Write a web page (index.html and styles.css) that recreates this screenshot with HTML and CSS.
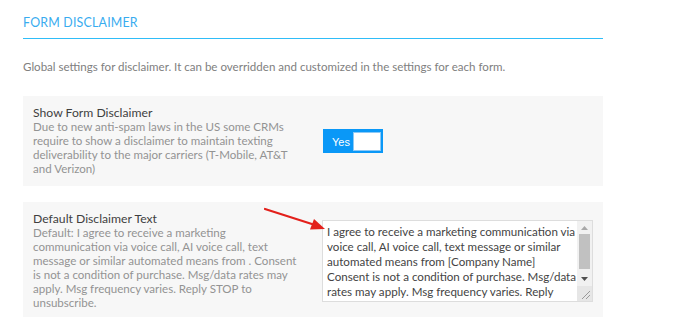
FILE: index.html
```html
<!DOCTYPE html>
<html>
<head>
<meta charset="utf-8">
<link rel="stylesheet" href="styles.css">
</head>
<body>
<div class="page">
  <h2 class="section-title">FORM DISCLAIMER</h2>
  <p class="section-desc">Global settings for disclaimer. It can be overridden and customized in the settings for each form.</p>

  <div class="setting">
    <div class="setting-info">
      <div class="setting-label">Show Form Disclaimer</div>
      <div class="setting-help">Due to new anti-spam laws in the US some CRMs require to show a disclaimer to maintain texting deliverability to the major carriers (T-Mobile, AT&amp;T and Verizon)</div>
    </div>
    <div class="setting-control">
      <div class="toggle"><span class="toggle-text">Yes</span><span class="toggle-knob"></span></div>
    </div>
  </div>

  <div class="setting setting-text">
    <div class="setting-info">
      <div class="setting-label">Default Disclaimer Text</div>
      <div class="setting-help">Default: I agree to receive a marketing communication via voice call, AI voice call, text message or similar automated means from . Consent is not a condition of purchase. Msg/data rates may apply. Msg frequency varies. Reply STOP to unsubscribe.</div>
    </div>
    <div class="setting-control">
      <div class="textarea-box">
        <textarea class="disclaimer-text">I agree to receive a marketing communication via voice call, AI voice call, text message or similar automated means from [Company Name] Consent is not a condition of purchase. Msg/data rates may apply. Msg frequency varies. Reply STOP to unsubscribe.</textarea>
        <div class="scrollbar">
          <div class="sb-button"><svg width="7" height="4" viewBox="0 0 7 4"><polygon points="0,4 3.5,0 7,4" fill="#a8a8a8"/></svg></div>
          <div class="sb-track"><div class="sb-thumb"></div></div>
          <div class="sb-button"><svg width="7" height="4" viewBox="0 0 7 4"><polygon points="0,0 7,0 3.5,4" fill="#505050"/></svg></div>
          <div class="sb-corner"><svg width="15" height="15" viewBox="0 0 15 15"><line x1="13" y1="5" x2="5" y2="13" stroke="#999" stroke-width="1"/><line x1="13" y1="9" x2="9" y2="13" stroke="#999" stroke-width="1"/></svg></div>
        </div>
      </div>
    </div>
    <svg class="arrow" width="70" height="30" viewBox="0 0 70 30">
      <line x1="2" y1="2" x2="52" y2="18" stroke="#e3201b" stroke-width="2.2" stroke-linecap="round"/>
      <polygon points="62,22 47,22.5 51,12" fill="#e3201b"/>
    </svg>
  </div>
</div>
</body>
</html>
```

FILE: styles.css
```css
html, body {
  margin: 0;
  padding: 0;
  background: #ffffff;
}

.page {
  width: 580px;
  margin-left: 23px;
  font-family: "Lato", sans-serif;
}

.section-title {
  margin: 0;
  padding-top: 16px;
  padding-bottom: 8px;
  font-family: "Lato", sans-serif;
  font-weight: 400;
  font-size: 12.4px;
  line-height: 14px;
  letter-spacing: 0.2px;
  color: #38acef;
  border-bottom: 1px solid #2fbdf8;
}

.section-desc {
  margin: 21px 0 0 0;
  font-size: 11.55px;
  line-height: 14px;
  color: #808080;
}

.setting {
  position: relative;
  margin-top: 22px;
  background: #f7f7f7;
  padding: 10px;
  display: flex;
  align-items: center;
}

.setting-text {
  margin-top: 16px;
  padding-bottom: 7px;
}

.setting-info {
  width: 270px;
  margin-right: 20px;
}

.setting-label {
  font-family: "Lato", sans-serif;
  font-size: 12.2px;
  line-height: 14px;
  color: #3f3f3f;
}

.setting-help {
  font-size: 11.55px;
  line-height: 14px;
  color: #939393;
}

.toggle {
  width: 60px;
  height: 24px;
  box-sizing: border-box;
  background: #0a98f7;
  display: flex;
  align-items: center;
  padding: 3px 2px 2px 9px;
}

.toggle-text {
  font-family: "Liberation Sans", sans-serif;
  font-size: 11px;
  color: #ffffff;
  flex: 1;
}

.toggle-knob {
  width: 28px;
  height: 19px;
  box-sizing: border-box;
  background: #ffffff;
  border: 1px solid #8cc9f6;
}

.textarea-box {
  display: flex;
  width: 271px;
  height: 82px;
  box-sizing: border-box;
  border: 1px solid #dddddd;
  background: #ffffff;
}

.disclaimer-text {
  flex: 1;
  min-width: 0;
  margin: 0;
  padding: 3px 0 3px 4px;
  border: none;
  outline: none;
  resize: none;
  overflow: hidden;
  background: #ffffff;
  font-family: "Lato", sans-serif;
  font-size: 11.6px;
  line-height: 15px;
  color: #444444;
}

.scrollbar {
  width: 15px;
  display: flex;
  flex-direction: column;
  background: #f1f1f1;
}

.sb-button {
  height: 13px;
  display: flex;
  align-items: center;
  justify-content: center;
}

.sb-button:nth-child(3) {
  height: 15px;
}

.sb-track {
  flex: 1;
  display: flex;
  flex-direction: column;
}

.sb-thumb {
  height: 35px;
  margin: 0 2px;
  background: #c1c1c1;
}

.sb-corner {
  height: 15px;
  background: #e6e6e6;
  display: flex;
}

.arrow {
  position: absolute;
  left: 240px;
  top: 5px;
}
```
